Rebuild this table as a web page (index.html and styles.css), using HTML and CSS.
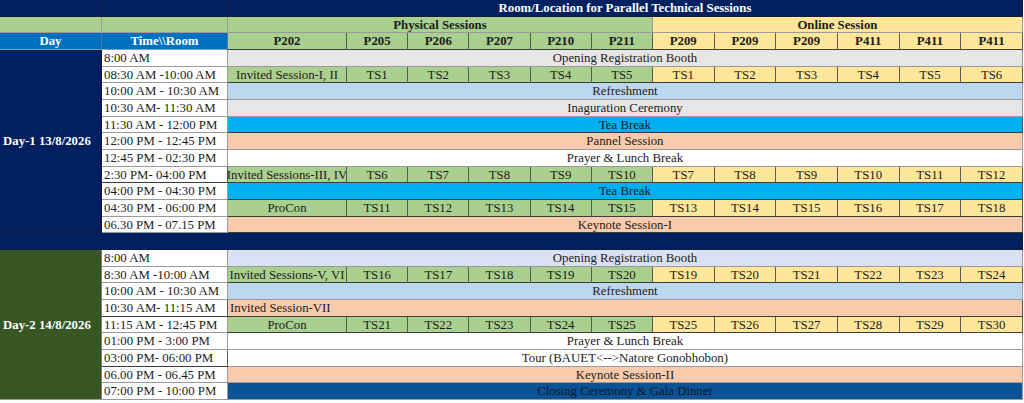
FILE: index.html
```html
<!DOCTYPE html>
<html>
<head>
<meta charset="utf-8">
<link rel="stylesheet" href="styles.css">
</head>
<body>
<div class="sheet">
  <!-- header row 1 -->
  <div class="c nv"></div>
  <div class="c nv"></div>
  <div class="c nv b wt sp">Room/Location for Parallel Technical Sessions</div>
  <!-- header row 2 -->
  <div class="c g"></div>
  <div class="c g"></div>
  <div class="c g b phys">Physical Sessions</div>
  <div class="c y b onl">Online Session</div>
  <!-- header row 3 -->
  <div class="c bl b wt">Day</div>
  <div class="c bl b wt">Time\\Room</div>
  <div class="c g b dk">P202</div>
  <div class="c g b dk">P205</div>
  <div class="c g b dk">P206</div>
  <div class="c g b dk">P207</div>
  <div class="c g b dk">P210</div>
  <div class="c g b dk">P211</div>
  <div class="c y b dk">P209</div>
  <div class="c y b dk">P209</div>
  <div class="c y b dk">P209</div>
  <div class="c y b dk">P411</div>
  <div class="c y b dk">P411</div>
  <div class="c y b dk">P411</div>

  <!-- Day 1 -->
  <div class="c nv b wt day day1">Day-1 13/8/2026</div>

  <div class="c t">8:00 AM</div>
  <div class="c gr sp">Opening Registration Booth</div>

  <div class="c t">08:30 AM -10:00 AM</div>
  <div class="c g dk">Invited Session-I, II</div>
  <div class="c g dk">TS1</div><div class="c g dk">TS2</div><div class="c g dk">TS3</div><div class="c g dk">TS4</div><div class="c g dk">TS5</div>
  <div class="c y dk">TS1</div><div class="c y dk">TS2</div><div class="c y dk">TS3</div><div class="c y dk">TS4</div><div class="c y dk">TS5</div><div class="c y dk">TS6</div>

  <div class="c t">10:00 AM - 10:30 AM</div>
  <div class="c lb sp">Refreshment</div>

  <div class="c t">10:30 AM- 11:30 AM</div>
  <div class="c gr sp">Inaguration Ceremony</div>

  <div class="c t">11:30 AM - 12:00 PM</div>
  <div class="c tb sp dk">Tea Break</div>

  <div class="c t">12:00 PM - 12:45 PM</div>
  <div class="c pc sp">Pannel Session</div>

  <div class="c t">12:45 PM - 02:30 PM</div>
  <div class="c w sp">Prayer &amp; Lunch Break</div>

  <div class="c t dk">2:30 PM- 04:00 PM</div>
  <div class="c g dk">Invited Sessions-III, IV</div>
  <div class="c g dk">TS6</div><div class="c g dk">TS7</div><div class="c g dk">TS8</div><div class="c g dk">TS9</div><div class="c g dk">TS10</div>
  <div class="c y dk">TS7</div><div class="c y dk">TS8</div><div class="c y dk">TS9</div><div class="c y dk">TS10</div><div class="c y dk">TS11</div><div class="c y dk">TS12</div>

  <div class="c t">04:00 PM - 04:30 PM</div>
  <div class="c tb sp dk">Tea Break</div>

  <div class="c t">04:30 PM - 06:00 PM</div>
  <div class="c g dk">ProCon</div>
  <div class="c g dk">TS11</div><div class="c g dk">TS12</div><div class="c g dk">TS13</div><div class="c g dk">TS14</div><div class="c g dk">TS15</div>
  <div class="c y dk">TS13</div><div class="c y dk">TS14</div><div class="c y dk">TS15</div><div class="c y dk">TS16</div><div class="c y dk">TS17</div><div class="c y dk">TS18</div>

  <div class="c t">06.30 PM - 07.15 PM</div>
  <div class="c pc sp dk">Keynote Session-I</div>

  <!-- separator -->
  <div class="c nv sep"></div>

  <!-- Day 2 -->
  <div class="c dg b wt day day2">Day-2 14/8/2026</div>

  <div class="c t">8:00 AM</div>
  <div class="c lv sp">Opening Registration Booth</div>

  <div class="c t">8:30 AM -10:00 AM</div>
  <div class="c g dk">Invited Sessions-V, VI</div>
  <div class="c g dk">TS16</div><div class="c g dk">TS17</div><div class="c g dk">TS18</div><div class="c g dk">TS19</div><div class="c g dk">TS20</div>
  <div class="c y dk">TS19</div><div class="c y dk">TS20</div><div class="c y dk">TS21</div><div class="c y dk">TS22</div><div class="c y dk">TS23</div><div class="c y dk">TS24</div>

  <div class="c t">10:00 AM - 10:30 AM</div>
  <div class="c lb sp">Refreshment</div>

  <div class="c t dk">10:30 AM- 11:15 AM</div>
  <div class="c pc sp left dk">Invited Session-VII</div>

  <div class="c t">11:15 AM - 12:45 PM</div>
  <div class="c g dk">ProCon</div>
  <div class="c g dk">TS21</div><div class="c g dk">TS22</div><div class="c g dk">TS23</div><div class="c g dk">TS24</div><div class="c g dk">TS25</div>
  <div class="c y dk">TS25</div><div class="c y dk">TS26</div><div class="c y dk">TS27</div><div class="c y dk">TS28</div><div class="c y dk">TS29</div><div class="c y dk">TS30</div>

  <div class="c t">01:00 PM - 3:00 PM</div>
  <div class="c w sp">Prayer &amp; Lunch Break</div>

  <div class="c t dk">03:00 PM- 06:00 PM</div>
  <div class="c w sp">Tour (BAUET&lt;--&gt;Natore Gonobhobon)</div>

  <div class="c t">06.00 PM - 06.45 PM</div>
  <div class="c pc sp">Keynote Session-II</div>

  <div class="c t">07:00 PM - 10:00 PM</div>
  <div class="c cb sp">Closing Ceremony &amp; Gala Dinner</div>
</div>
</body>
</html>
```

FILE: styles.css
```css
html, body {
  margin: 0;
  padding: 0;
  background: #ffffff;
}

.sheet {
  display: grid;
  width: 1023px;
  height: 400px;
  grid-template-columns: 102px 126px 119px repeat(5, 61.2px) repeat(6, 61.667px);
  grid-template-rows: repeat(24, 1fr);
  font-family: "Liberation Serif", "Times New Roman", serif;
  font-size: 12.8px;
  color: #1c1c1c;
  border-right: 1px solid #7a7a7a;
  box-sizing: border-box;
}

.c {
  box-sizing: border-box;
  display: flex;
  align-items: center;
  justify-content: center;
  white-space: nowrap;
  overflow: hidden;
  line-height: 1;
  padding-top: 1px;
  border-right: 1px solid #9a9a9a;
  border-bottom: 1px solid #9a9a9a;
  min-width: 0;
  min-height: 0;
}

.c.dk {
  border-bottom-color: #3c3c3c;
  border-right-color: #5a5a5a;
}

.b { font-weight: bold; }
.wt { color: #ffffff; }

.sp { grid-column: 3 / span 12; }
.phys { grid-column: 3 / span 6; }
.onl { grid-column: 9 / span 6; }
.sep { grid-column: 1 / -1; border-right-color: #00164a; border-bottom-color: #4a5a7a; }

.day {
  justify-content: flex-start;
  padding-left: 3px;
  grid-column: 1;
  border-right-color: #7a7a7a;
}
.day1 { grid-row: 4 / span 11; }
.day2 { grid-row: 16 / span 9; }

.t {
  justify-content: flex-start;
  padding-left: 2px;
  background: #ffffff;
}

.left {
  justify-content: flex-start;
  padding-left: 2px;
}

.nv { background: #002060; border-right-color: #101c3a; border-bottom-color: #101c3a; }
.g  { background: #a9d08e; }
.y  { background: #ffe699; }
.bl { background: #0070c0; border-right-color: #4a7aa8; }
.gr { background: #e7e6e6; }
.lb { background: #bdd7ee; }
.tb { background: #00b0f0; }
.pc { background: #f8cbad; }
.w  { background: #ffffff; }
.lv { background: #d9e1f2; }
.dg { background: #375623; }
.cb { background: #0b5394; color: #101828; }
```
